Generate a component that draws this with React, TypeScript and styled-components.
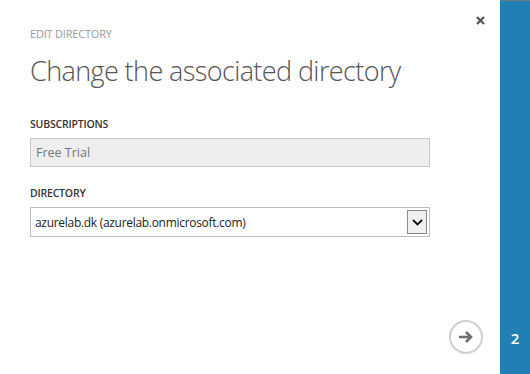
import React from "react";
import styled, { createGlobalStyle } from "styled-components";

const GlobalStyle = createGlobalStyle`
  html, body {
    margin: 0;
    padding: 0;
    background: #ffffff;
  }
  body {
    font-family: "Open Sans", "Noto Sans", Arial, sans-serif;
  }
`;

const App = () => {
  return (
    <Wrapper>
      <GlobalStyle />
      <Main>
        <TopBar>
          <Kicker>EDIT DIRECTORY</Kicker>
          <CloseButton aria-label="close">
            <svg width="9" height="9" viewBox="0 0 9 9">
              <path d="M1 1L8 8M8 1L1 8" stroke="#555" strokeWidth="2.2" />
            </svg>
          </CloseButton>
        </TopBar>
        <Title>Change the associated directory</Title>
        <Form>
          <Field>
            <Label>SUBSCRIPTIONS</Label>
            <ReadOnlyBox>Free Trial</ReadOnlyBox>
          </Field>
          <Field>
            <Label>DIRECTORY</Label>
            <SelectBox>
              <SelectText>azurelab.dk (azurelab.onmicrosoft.com)</SelectText>
              <DropButton>
                <svg width="11" height="7" viewBox="0 0 11 7">
                  <path d="M1 1L5.5 5.5L10 1" stroke="#111" strokeWidth="1.8" fill="none" />
                </svg>
              </DropButton>
            </SelectBox>
          </Field>
        </Form>
        <Footer>
          <NextButton aria-label="next">
            <svg width="16" height="14" viewBox="0 0 16 14">
              <path d="M1 7H13M8 2L13 7L8 12" stroke="#6e6e6e" strokeWidth="2.6" fill="none" />
            </svg>
          </NextButton>
        </Footer>
      </Main>
      <StepBar>
        <StepNumber>2</StepNumber>
      </StepBar>
    </Wrapper>
  );
};

const Wrapper = styled.div`
  display: flex;
  width: 530px;
  height: 374px;
  overflow: hidden;
`;

const Main = styled.div`
  flex: 1;
  display: flex;
  flex-direction: column;
  padding: 0 17px 0 30px;
`;

const TopBar = styled.div`
  display: flex;
  justify-content: space-between;
  align-items: flex-start;
  padding-top: 16px;
`;

const Kicker = styled.div`
  margin-top: 10px;
  font-size: 11px;
  color: #9a9a9a;
  letter-spacing: -0.2px;
`;

const CloseButton = styled.div`
  display: flex;
  width: 9px;
  height: 9px;
  margin-right: -2px;
`;

const Title = styled.h1`
  margin: 11px 0 0;
  font-size: 27px;
  font-weight: 300;
  color: #555;
  letter-spacing: -0.6px;
  line-height: 38px;
`;

const Form = styled.div`
  display: flex;
  flex-direction: column;
  gap: 19px;
  margin-top: 27px;
  width: 400px;
`;

const Field = styled.div`
  display: flex;
  flex-direction: column;
  gap: 7px;
`;

const Label = styled.div`
  font-size: 10.5px;
  font-weight: 600;
  color: #333;
  letter-spacing: -0.2px;
  line-height: 14px;
`;

const ReadOnlyBox = styled.div`
  box-sizing: border-box;
  height: 29px;
  border: 1px solid #c6c6c6;
  background: #eeeeee;
  color: #777;
  font-size: 12.5px;
  padding: 0 5px;
  display: flex;
  align-items: center;
`;

const SelectBox = styled.div`
  box-sizing: border-box;
  height: 30px;
  border: 1px solid #bdbdbd;
  background: #fff;
  display: flex;
  align-items: center;
  justify-content: space-between;
  padding: 0 2px 0 4px;
`;

const SelectText = styled.div`
  font-size: 12px;
  color: #222;
  letter-spacing: -0.3px;
`;

const DropButton = styled.div`
  box-sizing: border-box;
  width: 20px;
  height: 24px;
  border: 1px solid #8a8a8a;
  background: #f0f0f0;
  display: flex;
  align-items: center;
  justify-content: center;
`;

const Footer = styled.div`
  margin-top: auto;
  display: flex;
  justify-content: flex-end;
  padding-bottom: 20px;
`;

const NextButton = styled.div`
  box-sizing: border-box;
  width: 34px;
  height: 34px;
  border: 2px solid #cfcfcf;
  border-radius: 50%;
  display: flex;
  align-items: center;
  justify-content: center;
`;

const StepBar = styled.div`
  width: 30px;
  background: #2180b3;
  border-top: 1px solid #6b7c86;
  display: flex;
  flex-direction: column;
  justify-content: flex-end;
  align-items: center;
  padding-bottom: 26px;
`;

const StepNumber = styled.div`
  color: #fff;
  font-size: 15px;
  font-weight: 600;
`;

export default App;
